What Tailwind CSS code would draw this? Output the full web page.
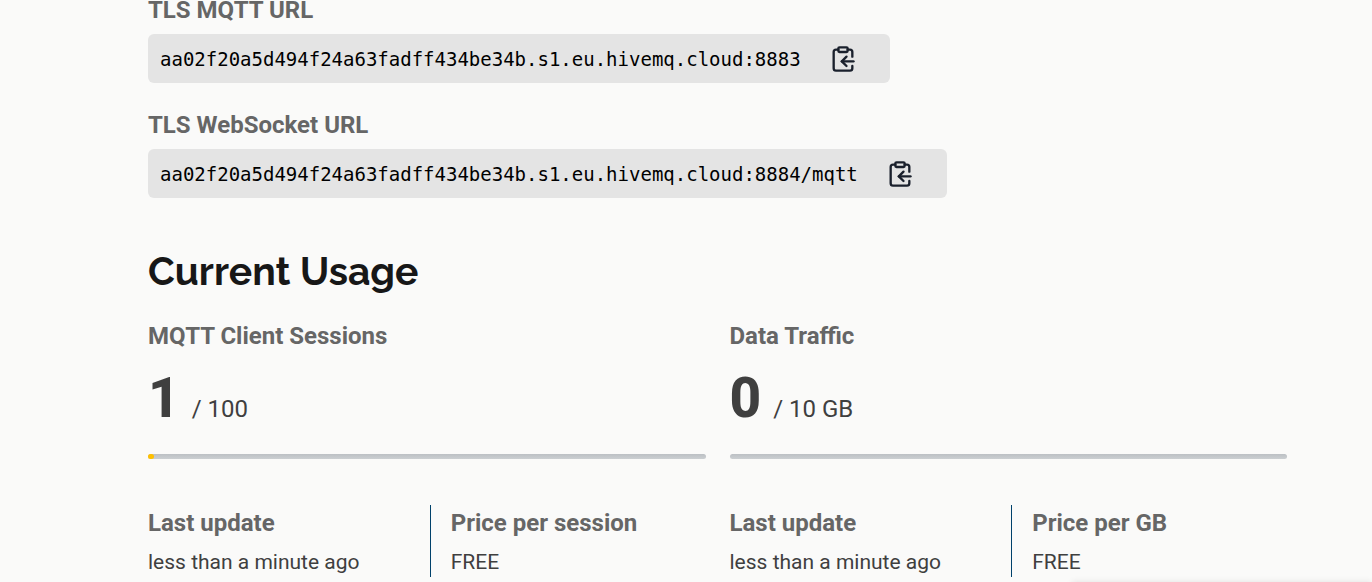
<!DOCTYPE html>
<html lang="en">
<head>
<meta charset="utf-8">
<meta name="viewport" content="width=device-width, initial-scale=1">
<title>Cluster overview</title>
<script src="https://cdn.jsdelivr.net/npm/@tailwindcss/browser@4"></script>
</head>
<body class="overflow-hidden bg-[#fafaf9] font-['Roboto',sans-serif] text-[#3f3f3f]">
<svg class="hidden" aria-hidden="true">
  <symbol id="clipboard-copy" viewBox="0 0 24 24" fill="none" stroke="currentColor" stroke-width="2" stroke-linecap="round" stroke-linejoin="round">
    <rect x="8" y="2" width="8" height="4" rx="1"/>
    <path d="M8 4H6a2 2 0 0 0-2 2v14a2 2 0 0 0 2 2h12a2 2 0 0 0 2-2v-2"/>
    <path d="M16 4h2a2 2 0 0 1 2 2v4"/>
    <path d="M21 14H11"/>
    <path d="m15 10-4 4 4 4"/>
  </symbol>
</svg>
<main class="pl-[148px] pr-[85px]">
  <section aria-label="Connection URLs">
    <h3 class="-mt-1 text-2xl leading-7 font-bold text-[#666]">TLS MQTT URL</h3>
    <div class="mt-2.5 flex h-[49px] w-fit items-center gap-7 rounded-md bg-[#e4e4e4] pl-3 pr-[33px] text-black">
      <code class="font-['DejaVu_Sans_Mono',monospace] text-[19px] leading-7">aa02f20a5d494f24a63fadff434be34b.s1.eu.hivemq.cloud:8883</code>
      <button type="button" aria-label="Copy TLS MQTT URL" class="text-[#1a202c]"><svg class="size-7"><use href="#clipboard-copy"/></svg></button>
    </div>
    <h3 class="mt-7 text-2xl leading-7 font-bold text-[#666]">TLS WebSocket URL</h3>
    <div class="mt-2.5 flex h-[49px] w-fit items-center gap-7 rounded-md bg-[#e4e4e4] pl-3 pr-[33px] text-black">
      <code class="font-['DejaVu_Sans_Mono',monospace] text-[19px] leading-7">aa02f20a5d494f24a63fadff434be34b.s1.eu.hivemq.cloud:8884/mqtt</code>
      <button type="button" aria-label="Copy TLS WebSocket URL" class="text-[#1a202c]"><svg class="size-7"><use href="#clipboard-copy"/></svg></button>
    </div>
  </section>

  <section aria-labelledby="usage">
    <h2 id="usage" class="mt-12 font-['Raleway','Lato',sans-serif] text-[39px] leading-[50px] font-bold text-[#171717]">Current Usage</h2>
    <div class="mt-[26px] grid grid-cols-2 gap-6">
      <article>
        <h3 class="text-2xl leading-7 font-bold text-[#666]">MQTT Client Sessions</h3>
        <p class="mt-4 flex items-baseline gap-3"><span class="text-[55px] leading-16 font-extrabold">1</span><span class="text-2xl">/ 100</span></p>
        <div role="progressbar" aria-label="MQTT client sessions" aria-valuenow="1" aria-valuemax="100" class="mt-6 h-[5px] rounded-full bg-linear-to-b from-[#bcc0c4] to-[#cbcfd2]"><div class="h-full rounded-full bg-[#ffc000]" style="width:1%"></div></div>
        <dl class="mt-[46px] grid grid-cols-2 gap-1.5">
          <div class="h-18 pt-1"><dt class="text-2xl leading-7 font-bold text-[#666]">Last update</dt><dd class="mt-2.5 text-[21px] leading-[30px]">less than a minute ago</dd></div>
          <div class="h-18 border-l border-[#00416b] pt-1 pl-5"><dt class="text-2xl leading-7 font-bold text-[#666]">Price per session</dt><dd class="mt-2.5 text-[21px] leading-[30px]">FREE</dd></div>
        </dl>
      </article>
      <article>
        <h3 class="text-2xl leading-7 font-bold text-[#666]">Data Traffic</h3>
        <p class="mt-4 flex items-baseline gap-3"><span class="text-[55px] leading-16 font-extrabold">0</span><span class="text-2xl">/ 10 GB</span></p>
        <div role="progressbar" aria-label="Data traffic" aria-valuenow="0" aria-valuemax="10" class="mt-6 h-[5px] rounded-full bg-linear-to-b from-[#bcc0c4] to-[#cbcfd2]"></div>
        <dl class="mt-[46px] grid grid-cols-2 gap-1.5">
          <div class="h-18 pt-1"><dt class="text-2xl leading-7 font-bold text-[#666]">Last update</dt><dd class="mt-2.5 text-[21px] leading-[30px]">less than a minute ago</dd></div>
          <div class="h-18 border-l border-[#00416b] pt-1 pl-5"><dt class="text-2xl leading-7 font-bold text-[#666]">Price per GB</dt><dd class="mt-2.5 text-[21px] leading-[30px]">FREE</dd></div>
        </dl>
      </article>
    </div>
  </section>
</main>
<div class="fixed right-0 -bottom-2 h-2 w-[300px] shadow-[0_0_6px_rgba(0,0,0,0.1)]"></div>
</body>
</html>
